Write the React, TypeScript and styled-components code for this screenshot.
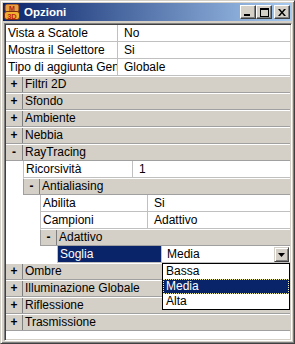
import React from "react";
import styled, { createGlobalStyle } from "styled-components";

//  styled-components
// ----------------------------------------------
const GlobalStyle = createGlobalStyle`
  html, body {
    margin: 0;
    padding: 0;
    background: #d4d0c8;
  }
  * {
    box-sizing: border-box;
  }
`;

const Window = styled.div`
  width: 295px;
  height: 344px;
  display: flex;
  flex-direction: column;
  background: #d4d0c8;
  border-top: 1px solid #d4d0c8;
  border-left: 1px solid #d4d0c8;
  border-right: 1px solid #404040;
  border-bottom: 1px solid #404040;
  box-shadow: inset 1px 1px 0 #ffffff, inset -1px -1px 0 #808080;
  padding: 2px;
  font-family: "Liberation Sans", Arial, sans-serif;
  font-size: 12px;
  color: #000;
`;

const TitleBar = styled.div`
  height: 18px;
  display: flex;
  align-items: center;
  padding: 0 2px 0 1px;
  background: linear-gradient(to right, #0a246a, #a6caf0);
`;

const TitleText = styled.span`
  flex: 1;
  margin-left: 4px;
  color: #fff;
  font-weight: bold;
  font-size: 11.5px;
`;

const CaptionButtons = styled.div`
  display: flex;
  align-items: center;
`;

const CapButton = styled.div<{ $gap?: number }>`
  width: 16px;
  height: 14px;
  margin-left: ${(p) => p.$gap ?? 0}px;
  display: flex;
  align-items: center;
  justify-content: center;
  background: #d4d0c8;
  border-top: 1px solid #ffffff;
  border-left: 1px solid #ffffff;
  border-right: 1px solid #404040;
  border-bottom: 1px solid #404040;
  box-shadow: inset -1px -1px 0 #808080;
`;

const Panel = styled.div`
  position: relative;
  flex: 1;
  margin: 2px 0 0 1px;
  background: #fff;
  border-top: 1px solid #808080;
  border-left: 1px solid #808080;
  border-right: 1px solid #ffffff;
  border-bottom: 1px solid #ffffff;
  box-shadow: inset 1px 1px 0 #404040, inset -1px -1px 0 #d4d0c8;
  padding: 1px;
  overflow: hidden;
`;

const Row = styled.div`
  display: flex;
  height: 17px;
`;

const Indent = styled.div<{ $level: number }>`
  width: ${(p) => p.$level * 17}px;
  flex: none;
  background: #fff;
`;

const PropBody = styled.div<{ $level: number }>`
  flex: 1;
  display: flex;
  border-bottom: 1px solid #c0c0c0;
  border-left: ${(p) => (p.$level > 0 ? "1px solid #c0c0c0" : "none")};
`;

const NameCell = styled.div<{ $width: number; $selected?: boolean }>`
  width: ${(p) => p.$width}px;
  flex: none;
  padding-left: 2px;
  line-height: 16px;
  white-space: nowrap;
  overflow: hidden;
  border-right: 1px solid #c0c0c0;
  background: ${(p) => (p.$selected ? "#0a246a" : "#fff")};
  color: ${(p) => (p.$selected ? "#fff" : "#000")};
`;

const ValueCell = styled.div`
  flex: 1;
  padding-left: 6px;
  line-height: 16px;
  white-space: nowrap;
  overflow: hidden;
`;

const ComboCell = styled.div`
  flex: 1;
  display: flex;
  align-items: center;
  padding: 1px 1px 0 5px;
  line-height: 15px;
`;

const ComboText = styled.span`
  flex: 1;
`;

const ComboArrow = styled.div`
  width: 15px;
  height: 15px;
  display: flex;
  align-items: center;
  justify-content: center;
  background: #d4d0c8;
  border-top: 1px solid #d4d0c8;
  border-left: 1px solid #d4d0c8;
  border-right: 1px solid #404040;
  border-bottom: 1px solid #404040;
  box-shadow: inset 1px 1px 0 #fff, inset -1px -1px 0 #808080;
`;

const GroupBody = styled.div<{ $level: number }>`
  flex: 1;
  display: flex;
  background: #d4d0c8;
  border-top: 1px solid #ffffff;
  border-bottom: 1px solid #a0a0a0;
  border-left: ${(p) => (p.$level > 0 ? "1px solid #a0a0a0" : "none")};
`;

const Toggle = styled.div<{ $level: number }>`
  width: ${(p) => (p.$level > 0 ? 16 : 17)}px;
  flex: none;
  text-align: center;
  line-height: 15px;
  font-weight: bold;
  border-right: 1px solid #808080;
`;

const GroupTitle = styled.div`
  padding-left: 2px;
  line-height: 15px;
  white-space: nowrap;
`;

const DropList = styled.div`
  position: absolute;
  left: 157px;
  top: 239px;
  width: 128px;
  height: 47px;
  background: #fff;
  border: 1px solid #000;
`;

const DropItem = styled.div<{ $active?: boolean }>`
  height: 15px;
  line-height: 13px;
  padding-left: 2px;
  background: ${(p) => (p.$active ? "#0a246a" : "#fff")};
  color: ${(p) => (p.$active ? "#fff" : "#000")};
  border: 1px ${(p) => (p.$active ? "dotted #f0f0a0" : "solid transparent")};
`;
// ----------------------------------------------

type Item =
  | { kind: "prop"; level: number; name: string; value: string; combo?: boolean }
  | { kind: "group"; level: number; title: string; open: boolean };

const nameWidths = [112, 109, 107, 104];

const items: Item[] = [
  { kind: "prop", level: 0, name: "Vista a Scatole", value: "No" },
  { kind: "prop", level: 0, name: "Mostra il Selettore", value: "Si" },
  { kind: "prop", level: 0, name: "Tipo di aggiunta Generale", value: "Globale" },
  { kind: "group", level: 0, title: "Filtri 2D", open: false },
  { kind: "group", level: 0, title: "Sfondo", open: false },
  { kind: "group", level: 0, title: "Ambiente", open: false },
  { kind: "group", level: 0, title: "Nebbia", open: false },
  { kind: "group", level: 0, title: "RayTracing", open: true },
  { kind: "prop", level: 1, name: "Ricorsività", value: "1" },
  { kind: "group", level: 1, title: "Antialiasing", open: true },
  { kind: "prop", level: 2, name: "Abilita", value: "Si" },
  { kind: "prop", level: 2, name: "Campioni", value: "Adattivo" },
  { kind: "group", level: 2, title: "Adattivo", open: true },
  { kind: "prop", level: 3, name: "Soglia", value: "Media", combo: true },
  { kind: "group", level: 0, title: "Ombre", open: false },
  { kind: "group", level: 0, title: "Illuminazione Globale", open: false },
  { kind: "group", level: 0, title: "Riflessione", open: false },
  { kind: "group", level: 0, title: "Trasmissione", open: false },
];

const AppIcon = () => (
  <svg width="16" height="16" viewBox="0 0 16 16">
    <rect x="1" y="0" width="14" height="8" rx="2" fill="#e8a040" stroke="#7a2a10" strokeWidth="1" />
    <text x="8" y="7" textAnchor="middle" fontSize="7" fontWeight="bold" fill="#b02010" fontFamily="Liberation Sans, sans-serif">
      M
    </text>
    <rect x="0.5" y="7.5" width="15" height="8" rx="2.5" fill="#f0b030" stroke="#7a2a10" strokeWidth="1" />
    <text x="8" y="14.5" textAnchor="middle" fontSize="7.5" fontWeight="bold" fill="#c02010" fontFamily="Liberation Sans, sans-serif">
      3D
    </text>
  </svg>
);

const MinGlyph = () => (
  <svg width="8" height="7" viewBox="0 0 8 7">
    <rect x="0" y="5" width="6" height="2" fill="#000" />
  </svg>
);

const MaxGlyph = () => (
  <svg width="9" height="9" viewBox="0 0 9 9">
    <rect x="0.5" y="0.5" width="8" height="8" fill="none" stroke="#000" />
    <rect x="0" y="0" width="9" height="2" fill="#000" />
  </svg>
);

const CloseGlyph = () => (
  <svg width="8" height="7" viewBox="0 0 8 7">
    <path d="M0 0h2l2 2.5L6 0h2L5 3.5 8 7H6L4 4.5 2 7H0l3-3.5z" fill="#000" />
  </svg>
);

const ArrowGlyph = () => (
  <svg width="7" height="4" viewBox="0 0 7 4">
    <path d="M0 0h7L3.5 4z" fill="#000" />
  </svg>
);

const PropertyRow = ({ item }: { item: Extract<Item, { kind: "prop" }> }) => (
  <Row>
    <Indent $level={item.level} />
    <PropBody $level={item.level}>
      <NameCell $width={nameWidths[item.level]} $selected={item.combo}>
        {item.name}
      </NameCell>
      {item.combo ? (
        <ComboCell>
          <ComboText>{item.value}</ComboText>
          <ComboArrow>
            <ArrowGlyph />
          </ComboArrow>
        </ComboCell>
      ) : (
        <ValueCell>{item.value}</ValueCell>
      )}
    </PropBody>
  </Row>
);

const GroupRow = ({ item }: { item: Extract<Item, { kind: "group" }> }) => (
  <Row>
    <Indent $level={item.level} />
    <GroupBody $level={item.level}>
      <Toggle $level={item.level}>{item.open ? "-" : "+"}</Toggle>
      <GroupTitle>{item.title}</GroupTitle>
    </GroupBody>
  </Row>
);

const App = () => {
  return (
    <>
      <GlobalStyle />
      <Window>
        <TitleBar>
          <AppIcon />
          <TitleText>Opzioni</TitleText>
          <CaptionButtons>
            <CapButton>
              <MinGlyph />
            </CapButton>
            <CapButton>
              <MaxGlyph />
            </CapButton>
            <CapButton $gap={2}>
              <CloseGlyph />
            </CapButton>
          </CaptionButtons>
        </TitleBar>
        <Panel>
          {items.map((it, i) =>
            it.kind === "prop" ? <PropertyRow key={i} item={it} /> : <GroupRow key={i} item={it} />
          )}
          <DropList>
            <DropItem>Bassa</DropItem>
            <DropItem $active>Media</DropItem>
            <DropItem>Alta</DropItem>
          </DropList>
        </Panel>
      </Window>
    </>
  );
};

export default App;
